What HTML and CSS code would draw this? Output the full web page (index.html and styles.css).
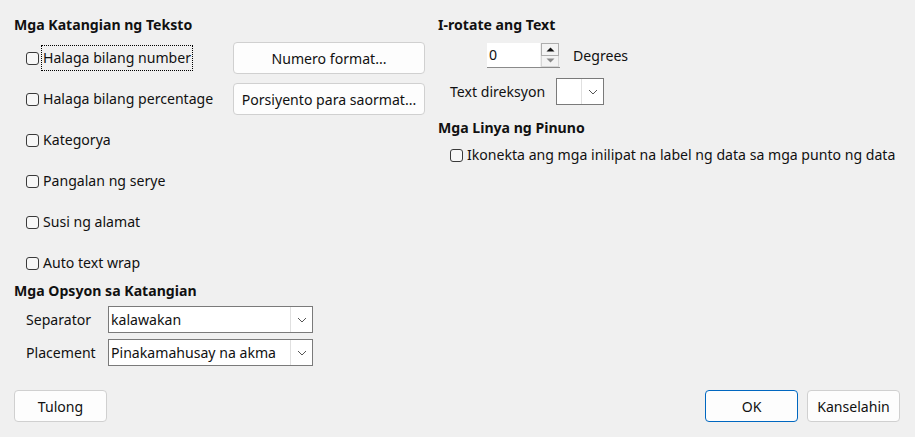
FILE: index.html
```html
<!DOCTYPE html>
<html lang="tl">
<head>
<meta charset="utf-8">
<title>Mga Katangian ng Teksto</title>
<link rel="stylesheet" href="styles.css">
</head>
<body>
<div class="dialog">
  <div class="columns">
    <div class="left">
      <div class="heading">Mga Katangian ng Teksto</div>
      <div class="options">
        <label class="check"><span class="cb"></span><span class="txt focus">Halaga bilang number</span></label>
        <button class="btn wide">Numero format...</button>
        <label class="check"><span class="cb"></span><span class="txt">Halaga bilang percentage</span></label>
        <button class="btn wide">Porsiyento para saormat...</button>
        <label class="check"><span class="cb"></span><span class="txt">Kategorya</span></label>
        <span></span>
        <label class="check"><span class="cb"></span><span class="txt">Pangalan ng serye</span></label>
        <span></span>
        <label class="check"><span class="cb"></span><span class="txt">Susi ng alamat</span></label>
        <span></span>
        <label class="check"><span class="cb"></span><span class="txt">Auto text wrap</span></label>
        <span></span>
      </div>
      <div class="heading h-opts">Mga Opsyon sa Katangian</div>
      <div class="combos">
        <span class="lbl">Separator</span>
        <div class="combo"><span class="val">kalawakan</span><span class="drop"><svg width="10" height="6" viewBox="0 0 10 6"><path d="M1 1 L5 5 L9 1" fill="none" stroke="#555" stroke-width="1"/></svg></span></div>
        <span class="lbl">Placement</span>
        <div class="combo"><span class="val">Pinakamahusay na akma</span><span class="drop"><svg width="10" height="6" viewBox="0 0 10 6"><path d="M1 1 L5 5 L9 1" fill="none" stroke="#555" stroke-width="1"/></svg></span></div>
      </div>
    </div>
    <div class="right">
      <div class="heading">I-rotate ang Text</div>
      <div class="spin-row">
        <div class="spin">
          <span class="spin-val">0</span>
          <span class="spin-btns">
            <span class="up"><svg width="9" height="5" viewBox="0 0 9 5"><path d="M0.5 4.5 L4.5 0.5 L8.5 4.5 Z" fill="#111"/></svg></span>
            <span class="down"><svg width="9" height="5" viewBox="0 0 9 5"><path d="M0.5 0.5 L4.5 4.5 L8.5 0.5 Z" fill="#8a8a8a"/></svg></span>
          </span>
        </div>
        <span class="deg">Degrees</span>
      </div>
      <div class="dir-row">
        <span class="dir-lbl">Text direksyon</span>
        <div class="combo small"><span class="val"></span><span class="drop"><svg width="10" height="6" viewBox="0 0 10 6"><path d="M1 1 L5 5 L9 1" fill="none" stroke="#555" stroke-width="1"/></svg></span></div>
      </div>
      <div class="heading h-lead">Mga Linya ng Pinuno</div>
      <label class="check lead"><span class="cb"></span><span class="txt">Ikonekta ang mga inilipat na label ng data sa mga punto ng data</span></label>
    </div>
  </div>
  <div class="bottom">
    <button class="btn">Tulong</button>
    <div class="right-btns">
      <button class="btn primary">OK</button>
      <button class="btn">Kanselahin</button>
    </div>
  </div>
</div>
</body>
</html>
```

FILE: styles.css
```css
html, body {
  margin: 0;
  padding: 0;
  background: #f0f0f0;
}
body {
  font-family: "Noto Sans", "Open Sans", sans-serif;
  font-size: 14.1px;
  color: #111;
}
.dialog {
  box-sizing: border-box;
  height: 437px;
  padding: 15px 15px 15px 14px;
  display: flex;
  flex-direction: column;
}
.columns {
  display: flex;
}
.left {
  width: 424px;
}
.right {
  flex: 1;
}
.heading {
  font-weight: bold;
  height: 20px;
  line-height: 20px;
}
.options {
  display: grid;
  grid-template-columns: 207px 192px;
  grid-auto-rows: 32px;
  row-gap: 9px;
  margin-top: 7px;
  padding-left: 12px;
}
.check {
  display: flex;
  align-items: center;
  gap: 4px;
}
.cb {
  box-sizing: border-box;
  width: 13px;
  height: 13px;
  border: 1px solid #3a3a3a;
  border-radius: 3px;
  background: #f7f7f7;
  flex: none;
}
.txt {
  line-height: 20px;
  white-space: nowrap;
}
.txt.focus {
  outline: 1px dotted #000;
  line-height: 24px;
  padding: 0 1px;
  margin-left: -1px;
}
.btn {
  box-sizing: border-box;
  height: 32px;
  width: 93px;
  background: #fdfdfd;
  border: 1px solid #d0d0d0;
  border-radius: 4px;
  font-family: inherit;
  font-size: 14.1px;
  color: #111;
  padding: 0;
}
.btn.wide {
  width: 192px;
}
.btn.primary {
  border-color: #0067c0;
}
.h-opts {
  margin-top: 2px;
}
.combos {
  display: grid;
  grid-template-columns: 82px 205px;
  grid-auto-rows: 27px;
  row-gap: 6px;
  margin-top: 5px;
  padding-left: 12px;
  align-items: center;
}
.combo {
  box-sizing: border-box;
  height: 27px;
  border: 1px solid #7a7a7a;
  background: #fff;
  display: flex;
}
.combo .val {
  flex: 1;
  line-height: 25px;
  padding-left: 2px;
  white-space: nowrap;
}
.combo .drop {
  width: 21px;
  border-left: 1px solid #e0e0e0;
  display: flex;
  align-items: center;
  justify-content: center;
}
.spin-row {
  display: flex;
  align-items: center;
  margin-top: 8px;
  padding-left: 49px;
  gap: 13px;
}
.spin {
  box-sizing: border-box;
  width: 73px;
  height: 25px;
  background: #fff;
  border-bottom: 1px solid #8a8a8a;
  display: flex;
}
.spin-val {
  flex: 1;
  line-height: 24px;
  padding-left: 2px;
}
.spin-btns {
  width: 20px;
  display: flex;
  flex-direction: column;
  background: #f0f0f0;
}
.spin-btns .up, .spin-btns .down {
  flex: 1;
  display: flex;
  align-items: center;
  justify-content: center;
  box-sizing: border-box;
  margin: 0 1px;
}
.spin-btns .up {
  border: 1px solid #adadad;
  background: #f3f3f3;
}
.spin-btns .down {
  border: 1px solid #d6d6d6;
  border-top: none;
  background: #f3f3f3;
}
.dir-row {
  display: flex;
  align-items: center;
  margin-top: 10px;
  padding-left: 12px;
}
.dir-lbl {
  width: 106px;
}
.combo.small {
  width: 48px;
  height: 27px;
}
.h-lead {
  margin-top: 13px;
}
.check.lead {
  margin-top: 7px;
  padding-left: 12px;
  height: 20px;
}
.bottom {
  margin-top: auto;
  display: flex;
  justify-content: space-between;
}
.right-btns {
  display: flex;
  gap: 9px;
}
```
